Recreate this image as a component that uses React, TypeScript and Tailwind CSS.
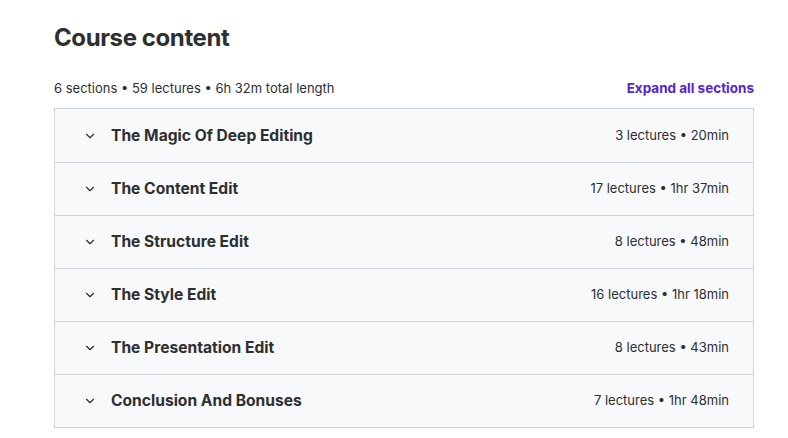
import { ChevronDown } from 'lucide-react'

const sections = [
  { title: 'The Magic Of Deep Editing', meta: '3 lectures • 20min' },
  { title: 'The Content Edit', meta: '17 lectures • 1hr 37min' },
  { title: 'The Structure Edit', meta: '8 lectures • 48min' },
  { title: 'The Style Edit', meta: '16 lectures • 1hr 18min' },
  { title: 'The Presentation Edit', meta: '8 lectures • 43min' },
  { title: 'Conclusion And Bonuses', meta: '7 lectures • 1hr 48min' },
]

export default function App() {
  return (
    <div className="min-h-screen bg-white text-[#2d2f31] font-['Inter',sans-serif]">
      <div className="w-[700px] ml-[54px] pt-[24px]">
        <h2 className="text-[24px] leading-[28px] font-bold tracking-[-0.4px]">Course content</h2>

        <div className="mt-[27px] flex items-end justify-between pb-[11px]">
          <span className="text-[13px] leading-[18px]">6 sections • 59 lectures • 6h 32m total length</span>
          <button type="button" className="text-[13.5px] leading-[18px] font-bold text-[#5624d0]">
            Expand all sections
          </button>
        </div>

        <div className="border border-[#d1d7dc]">
          {sections.map((s, i) => (
            <div
              key={s.title}
              className={`flex items-center h-[53px] bg-[#f7f9fa] pl-[28px] pr-[24px] ${i > 0 ? 'border-t border-[#d1d7dc]' : ''}`}
            >
              <ChevronDown className="w-[14px] h-[14px] mr-[14px]" strokeWidth={2} />
              <span className="flex-1 text-[15.6px] font-bold">{s.title}</span>
              <span className="text-[13px]">{s.meta}</span>
            </div>
          ))}
        </div>
      </div>
    </div>
  )
}
